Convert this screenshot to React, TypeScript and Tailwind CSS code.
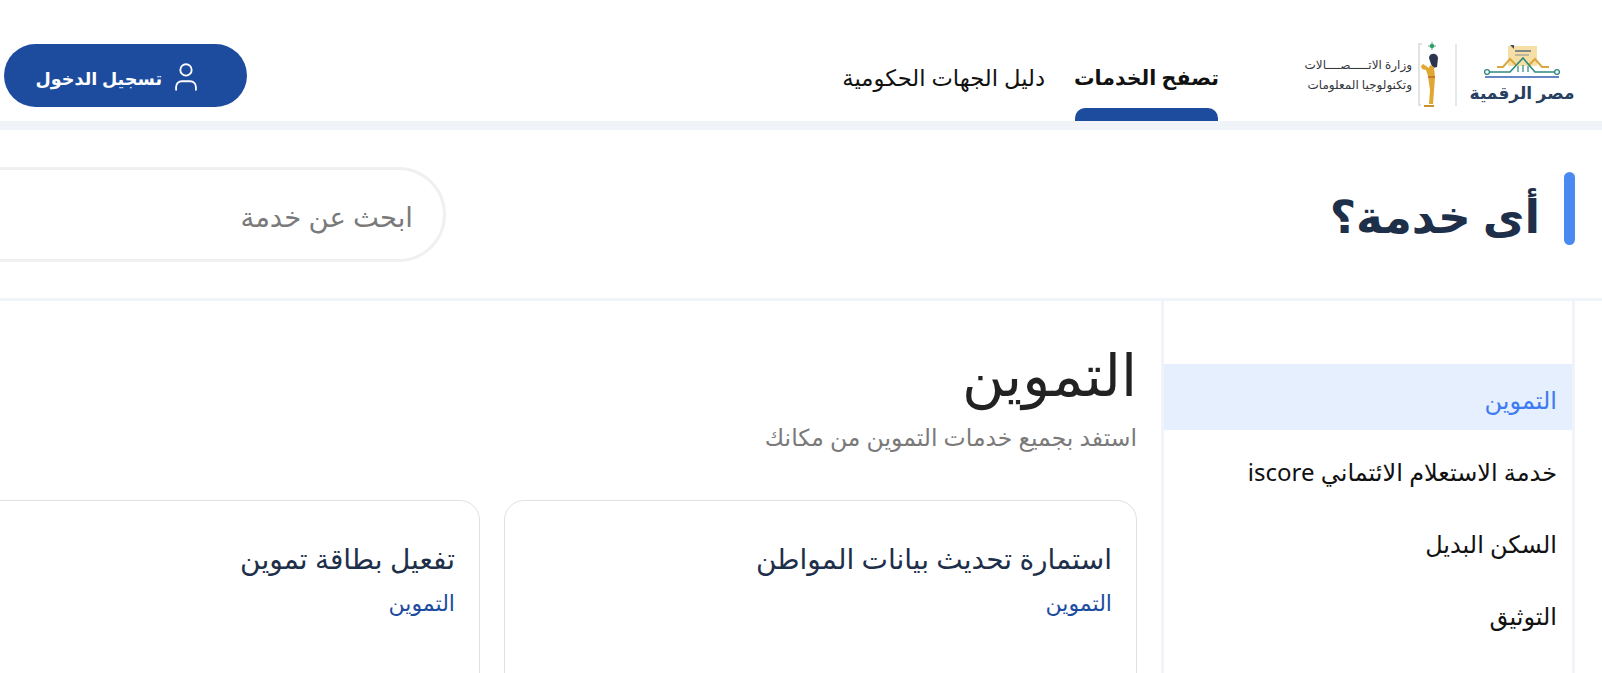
import { User } from "lucide-react";

const font = { fontFamily: '"Noto Sans", "DejaVu Sans", sans-serif' };

const sideItems = ["التموين", "خدمة الاستعلام الائتماني iscore", "السكن البديل", "التوثيق"];

function MasrLogo() {
  return (
    <div className="flex w-[102px] flex-col items-center">
      <svg width="78" height="36" viewBox="0 0 78 36">
        <rect x="25" y="2" width="29" height="20" fill="#f6dfa4" />
        <path d="M31 5l-4-4h4z" fill="#3c4d66" />
        <path d="M32 7h16" stroke="#5b6b80" strokeWidth="1.5" />
        <path d="M32 11h14" stroke="#8a8f8f" strokeWidth="1" />
        <path d="M14 23h6l7-8 6 6M46 21l6-6 7 8h7" fill="none" stroke="#dba83f" strokeWidth="2" />
        <path d="M6 28h21l13-14 12 14h20" fill="none" stroke="#2e8a7e" strokeWidth="1.6" />
        <circle cx="4" cy="28" r="2.4" fill="#fff" stroke="#2e8a7e" strokeWidth="1.3" />
        <circle cx="74" cy="28" r="2.4" fill="#fff" stroke="#2e8a7e" strokeWidth="1.3" />
        <path d="M35 28v-6M40 28v-7M45 28v-6" stroke="#2e8a7e" strokeWidth="1.2" />
        <path d="M2 33h74" stroke="#2f5fae" strokeWidth="1.6" />
      </svg>
      <span className="text-[17px] leading-[26px] font-bold whitespace-nowrap text-[#28405f]">مصر الرقمية</span>
    </div>
  );
}

function MinistryLogo() {
  return (
    <div className="flex items-center gap-[5px]">
      <svg width="24" height="66" viewBox="0 0 24 66">
        <path d="M5 2H2v61h2" fill="none" stroke="#d5d8d6" strokeWidth="1.4" />
        <circle cx="15" cy="4" r="2.2" fill="#2e9e6b" />
        <path d="M15 0v8M11 4h8" stroke="#2e9e6b" strokeWidth="0.8" />
        <path d="M12 16c0-5 8-6 9 0l-1 9-4 1-2-4z" fill="#2b3550" />
        <path d="M4 24l2-2 6 4 1-3 4 2 1 10-1 14-1 13h-4l1-14-2-14-2-6-4-1z" fill="#e0a832" />
        <path d="M7 63h10v2H7z" fill="#c8922a" />
        <path d="M11 35h7" stroke="#b5451f" strokeWidth="1" />
      </svg>
      <div className="flex w-[107px] flex-col gap-[2px] text-[12px] leading-[18px] whitespace-nowrap text-[#33363a]">
        <span>وزارة الاتـــــصــــالات</span>
        <span>وتكنولوجيا المعلومات</span>
      </div>
    </div>
  );
}

function ServiceCard({ title }: { title: string }) {
  return (
    <div className="h-[200px] w-[633px] shrink-0 rounded-[20px] border border-[#e0e0e0] px-[24px] pt-[36px]">
      <h3 className="text-[28px] leading-[42px] text-[#1e2f4a]">{title}</h3>
      <p className="mt-[7px] text-[22px] leading-[32px] text-[#1d4c9f]">التموين</p>
    </div>
  );
}

export default function App() {
  return (
    <div dir="rtl" style={font} className="h-[673px] w-full overflow-hidden bg-white">
      <header className="flex h-[121px] items-end justify-between pr-[29px] pl-[4px]">
        <div className="flex h-[121px] items-end">
          <div className="mb-[13px] flex items-center">
            <MasrLogo />
            <div className="mx-[14px] h-[62px] w-[2px] bg-[#e8e8e8]" />
            <MinistryLogo />
          </div>
          <nav className="mr-[87px] flex items-end gap-[30px]">
            <div className="flex w-[143px] flex-col items-center">
              <span className="mb-[13px] text-[20.5px] leading-[35px] font-bold whitespace-nowrap text-[#111]">تصفح الخدمات</span>
              <span className="h-[13px] w-full rounded-t-[10px] bg-[#1d4c9f]" />
            </div>
            <span className="mb-[26px] text-[22.7px] leading-[35px] whitespace-nowrap text-[#111]">دليل الجهات الحكومية</span>
          </nav>
        </div>
        <button className="mb-[14px] flex h-[63px] w-[243px] items-center gap-[7px] rounded-full bg-[#1d4c9f] pt-[2px] pr-[44px] text-[17.6px] font-bold text-white">
          <User size={34} strokeWidth={1.3} />
          <span className="pt-[3px]">تسجيل الدخول</span>
        </button>
      </header>
      <div className="h-[9px] bg-[#f0f4f9]" />

      <section className="flex h-[171px] items-center border-b-[3px] border-[#f0f4f9] pr-[27px]">
        <div className="flex w-[1129px] shrink-0 items-center gap-[24px]">
          <span className="mb-[12px] h-[73px] w-[11px] rounded-full bg-[#4a8af0]" />
          <h1 className="pt-[2px] text-[45.5px] leading-[73px] font-bold text-[#1e2f4a]">أى خدمة؟</h1>
        </div>
        <div className="flex h-[95px] w-[600px] shrink-0 items-center rounded-full border-[3px] border-[#f0f0f2] px-[30px] pt-[6px] text-[27.5px] text-[#7a7a7a]">
          ابحث عن خدمة
        </div>
      </section>

      <main className="flex pr-[27px]">
        <aside className="h-[372px] w-[414px] shrink-0 border-x-[3px] border-[#f0f4f9] pt-[63px]">
          {sideItems.map((item, i) => (
            <div
              key={item}
              className={`flex items-center px-[15px] text-[24px] whitespace-nowrap ${i === 0 ? "h-[66px] bg-[#e6effd] pt-[6px] text-[#3f7bf0]" : "h-[72px] pt-[11px] text-[#111]"}`}
            >
              {item}
            </div>
          ))}
        </aside>
        <div className="flex-1 pt-[37px] pr-[24px]">
          <h2 className="text-[58px] leading-[72px] text-[#222]">التموين</h2>
          <p className="mt-[12px] text-[23.5px] leading-[30px] text-[#7a7a7a]">استفد بجميع خدمات التموين من مكانك</p>
          <div className="mt-[48px] flex gap-[24px]">
            <ServiceCard title="استمارة تحديث بيانات المواطن" />
            <ServiceCard title="تفعيل بطاقة تموين" />
          </div>
        </div>
      </main>
    </div>
  );
}
